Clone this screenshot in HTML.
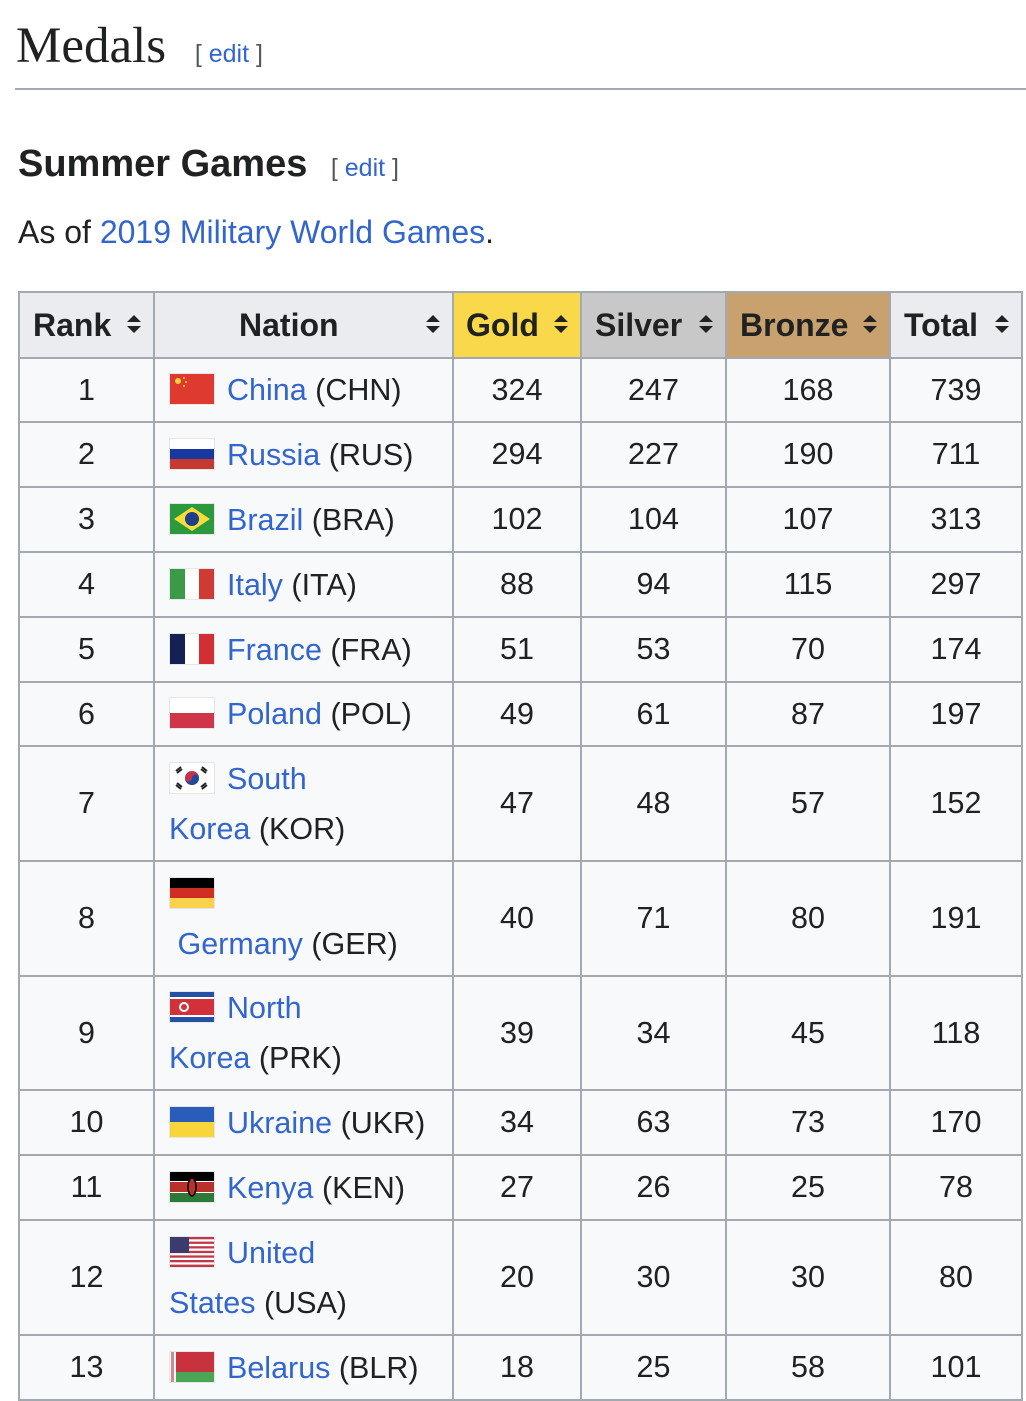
<!DOCTYPE html>
<html><head><meta charset="utf-8"><style>
body{margin:0;background:#fff;font-family:"Liberation Sans",sans-serif;color:#202122;width:1026px;height:1396px;overflow:hidden;position:relative}
a{color:#3366cc;text-decoration:none}
.h1{position:absolute;left:16px;top:16px;font-family:"Liberation Serif",serif;font-size:51px;line-height:60px}
.ed{font-family:"Liberation Sans",sans-serif;font-size:25px;color:#54595d}
.ed a{color:#3366cc}
.hr{position:absolute;left:15px;right:0;top:88px;height:2px;background:#a2a9b1}
.h2{position:absolute;left:18px;top:141px;font-weight:bold;font-size:38px;line-height:46px}
.p{position:absolute;left:18px;top:211px;font-size:32px;line-height:42px}
table{position:absolute;left:18px;top:291px;border-collapse:collapse;table-layout:fixed;background:#f8f9fa;font-size:30.5px}
td,th{border:2px solid #a2a9b1;padding:0;text-align:center}
th{background:#eaecf0;font-size:32px;text-align:left;padding-left:13px;position:relative}
th .s{position:absolute;right:12px;top:21px}
td.n{text-align:left;padding-left:14px;line-height:50px;white-space:nowrap}
.f{display:inline-block;vertical-align:-5px;width:46px;height:32px;border:1px solid #e6e6e6;box-sizing:border-box;margin-right:12px}
.f svg{display:block;width:44px;height:30px}
</style></head><body>
<div class="h1">Medals <span class="ed" style="margin-left:9px">&nbsp;[ <a>edit</a> ]</span></div>
<div class="hr"></div>
<div class="h2">Summer Games <span class="ed" style="font-weight:normal;margin-left:6px">&nbsp;[ <a>edit</a> ]</span></div>
<div class="p">As of <a>2019 Military World Games</a>.</div>
<svg width="0" height="0" style="position:absolute"><defs><symbol id="sort" viewBox="0 0 14 20"><path d="M7 1 L14 8 H0Z M7 19 L14 12 H0Z" fill="#202122"/></symbol></defs></svg>
<table>
<colgroup><col style="width:135px"><col style="width:299px"><col style="width:128px"><col style="width:145px"><col style="width:164px"><col style="width:132px"></colgroup>
<tr style="height:66px">
<th>Rank<svg class="s" width="14" height="20"><use href="#sort"/></svg></th>
<th style="padding-left:84px">Nation<svg class="s" width="14" height="20"><use href="#sort"/></svg></th>
<th style="background:#f9d949;padding-left:12px">Gold<svg class="s" width="14" height="20"><use href="#sort"/></svg></th>
<th style="background:#c8c8c8">Silver<svg class="s" width="14" height="20"><use href="#sort"/></svg></th>
<th style="background:#c9a16e">Bronze<svg class="s" width="14" height="20"><use href="#sort"/></svg></th>
<th>Total<svg class="s" width="14" height="20"><use href="#sort"/></svg></th>
</tr>
<tr style="height:64px"><td>1</td><td class="n"><span class="f"><svg viewBox="0 0 44 30"><rect width="44" height="30" fill="#de3a2f"/><circle cx="8" cy="7" r="3" fill="#f7d436"/><circle cx="14" cy="4" r="1" fill="#f7d436"/><circle cx="16" cy="8" r="1" fill="#f7d436"/><circle cx="14" cy="12" r="1" fill="#f7d436"/></svg></span><a>China</a> (CHN)</td><td>324</td><td>247</td><td>168</td><td>739</td></tr>
<tr style="height:65px"><td>2</td><td class="n"><span class="f"><svg viewBox="0 0 44 30"><rect width="44" height="10" fill="#fff"/><rect y="10" width="44" height="10" fill="#1839a1"/><rect y="20" width="44" height="10" fill="#c53a2e"/></svg></span><a>Russia</a> (RUS)</td><td>294</td><td>227</td><td>190</td><td>711</td></tr>
<tr style="height:65px"><td>3</td><td class="n"><span class="f"><svg viewBox="0 0 44 30"><rect width="44" height="30" fill="#2c9a3c"/><path d="M22 3 L40 15 L22 27 L4 15Z" fill="#f8dc3a"/><circle cx="22" cy="15" r="7" fill="#1f3e8c"/></svg></span><a>Brazil</a> (BRA)</td><td>102</td><td>104</td><td>107</td><td>313</td></tr>
<tr style="height:65px"><td>4</td><td class="n"><span class="f"><svg viewBox="0 0 44 30"><rect width="15" height="30" fill="#3a9a48"/><rect x="15" width="14" height="30" fill="#fff"/><rect x="29" width="15" height="30" fill="#cf3a34"/></svg></span><a>Italy</a> (ITA)</td><td>88</td><td>94</td><td>115</td><td>297</td></tr>
<tr style="height:65px"><td>5</td><td class="n"><span class="f"><svg viewBox="0 0 44 30"><rect width="15" height="30" fill="#152155"/><rect x="15" width="14" height="30" fill="#fff"/><rect x="29" width="15" height="30" fill="#d12f34"/></svg></span><a>France</a> (FRA)</td><td>51</td><td>53</td><td>70</td><td>174</td></tr>
<tr style="height:64px"><td>6</td><td class="n"><span class="f"><svg viewBox="0 0 44 30"><rect width="44" height="15" fill="#fff"/><rect y="15" width="44" height="15" fill="#d0364a"/></svg></span><a>Poland</a> (POL)</td><td>49</td><td>61</td><td>87</td><td>197</td></tr>
<tr style="height:115px"><td>7</td><td class="n"><span class="f"><svg viewBox="0 0 44 30"><rect width="44" height="30" fill="#fff"/><circle cx="22" cy="15" r="7" fill="#c9304a"/><path d="M15 15 A7 7 0 0 0 29 15 A3.5 3.5 0 0 0 22 15 A3.5 3.5 0 0 1 15 15Z" fill="#1f4a9a"/><g stroke="#222" stroke-width="2"><path d="M6 8 L11 4 M7 10 L12 6 M32 4 L37 8 M31 6 L36 10 M6 22 L11 26 M7 20 L12 24 M32 26 L37 22 M31 24 L36 20"/></g></svg></span><a>South</a><br><a>Korea</a> (KOR)</td><td>47</td><td>48</td><td>57</td><td>152</td></tr>
<tr style="height:115px"><td>8</td><td class="n"><span class="f"><svg viewBox="0 0 44 30"><rect width="44" height="10" fill="#000"/><rect y="10" width="44" height="10" fill="#d22d25"/><rect y="20" width="44" height="10" fill="#f9d14a"/></svg></span><br>&nbsp;<a>Germany</a> (GER)</td><td>40</td><td>71</td><td>80</td><td>191</td></tr>
<tr style="height:114px"><td>9</td><td class="n"><span class="f"><svg viewBox="0 0 44 30"><rect width="44" height="30" fill="#2450a5"/><rect y="5" width="44" height="20" fill="#fff"/><rect y="7" width="44" height="16" fill="#d2313a"/><circle cx="14" cy="15" r="5" fill="#fff"/><circle cx="14" cy="15" r="3" fill="#d2313a"/></svg></span><a>North</a><br><a>Korea</a> (PRK)</td><td>39</td><td>34</td><td>45</td><td>118</td></tr>
<tr style="height:65px"><td>10</td><td class="n"><span class="f"><svg viewBox="0 0 44 30"><rect width="44" height="15" fill="#2a5dba"/><rect y="15" width="44" height="15" fill="#f8d63a"/></svg></span><a>Ukraine</a> (UKR)</td><td>34</td><td>63</td><td>73</td><td>170</td></tr>
<tr style="height:65px"><td>11</td><td class="n"><span class="f"><svg viewBox="0 0 44 30"><rect width="44" height="9" fill="#000"/><rect y="9" width="44" height="12" fill="#fff"/><rect y="10" width="44" height="10" fill="#b8312a"/><rect y="21" width="44" height="9" fill="#2d7a38"/><ellipse cx="22" cy="15" rx="4" ry="9" fill="#b8312a" stroke="#000" stroke-width="1.5"/></svg></span><a>Kenya</a> (KEN)</td><td>27</td><td>26</td><td>25</td><td>78</td></tr>
<tr style="height:115px"><td>12</td><td class="n"><span class="f"><svg viewBox="0 0 44 30"><rect width="44" height="30" fill="#fff"/><g fill="#c0384a"><rect width="44" height="2.3"/><rect y="4.6" width="44" height="2.3"/><rect y="9.2" width="44" height="2.3"/><rect y="13.8" width="44" height="2.3"/><rect y="18.4" width="44" height="2.3"/><rect y="23" width="44" height="2.3"/><rect y="27.6" width="44" height="2.4"/></g><rect width="19" height="16" fill="#3c3b6e"/></svg></span><a>United</a><br><a>States</a> (USA)</td><td>20</td><td>30</td><td>30</td><td>80</td></tr>
<tr style="height:65px"><td>13</td><td class="n"><span class="f"><svg viewBox="0 0 44 30"><rect width="44" height="20" fill="#c8313e"/><rect y="20" width="44" height="10" fill="#4aa657"/><rect width="6" height="30" fill="#fff"/><rect x="1" width="3" height="30" fill="#c8313e" opacity=".6"/></svg></span><a>Belarus</a> (BLR)</td><td>18</td><td>25</td><td>58</td><td>101</td></tr>
</table>
</body></html>
